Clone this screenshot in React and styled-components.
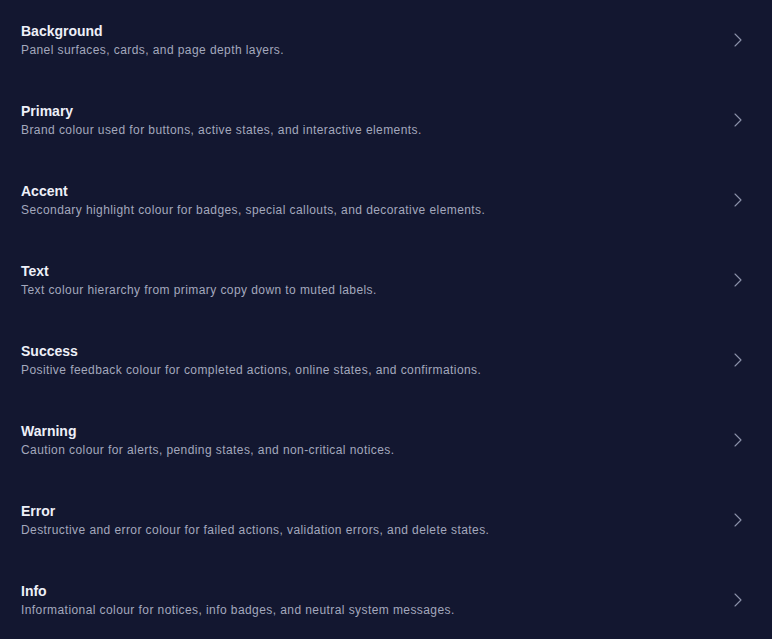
import React from 'react';
import styled, { createGlobalStyle } from 'styled-components';
import { ChevronRight } from 'lucide-react';

const tokens = [
  { name: 'Background', desc: 'Panel surfaces, cards, and page depth layers.' },
  { name: 'Primary', desc: 'Brand colour used for buttons, active states, and interactive elements.' },
  { name: 'Accent', desc: 'Secondary highlight colour for badges, special callouts, and decorative elements.' },
  { name: 'Text', desc: 'Text colour hierarchy from primary copy down to muted labels.' },
  { name: 'Success', desc: 'Positive feedback colour for completed actions, online states, and confirmations.' },
  { name: 'Warning', desc: 'Caution colour for alerts, pending states, and non-critical notices.' },
  { name: 'Error', desc: 'Destructive and error colour for failed actions, validation errors, and delete states.' },
  { name: 'Info', desc: 'Informational colour for notices, info badges, and neutral system messages.' },
];

const App = () => {
  return (
    <>
      <GlobalStyle />
      <List>
        {tokens.map((t) => (
          <Row key={t.name}>
            <Texts>
              <Title>{t.name}</Title>
              <Description>{t.desc}</Description>
            </Texts>
            <Chevron size={24} strokeWidth={1.1} />
          </Row>
        ))}
      </List>
    </>
  );
};

const GlobalStyle = createGlobalStyle`
  html, body {
    margin: 0;
    background: #131730;
  }
  body {
    font-family: "Liberation Sans", Arial, sans-serif;
  }
`;

const List = styled.div`
  display: flex;
  flex-direction: column;
  min-height: 100vh;
  background: #131730;
`;

const Row = styled.div`
  height: 80px;
  display: flex;
  align-items: center;
  justify-content: space-between;
  padding: 0 22px 0 21px;
  cursor: pointer;
`;

const Texts = styled.div`
  display: flex;
  flex-direction: column;
  gap: 4px;
`;

const Title = styled.div`
  font-size: 14px;
  font-weight: 700;
  line-height: 16px;
  color: #eef0f8;
`;

const Description = styled.div`
  font-size: 12px;
  line-height: 15px;
  color: #a3a8bd;
  letter-spacing: 0.42px;
`;

const Chevron = styled(ChevronRight)`
  color: #8c92aa;
  flex-shrink: 0;
`;

export default App;
